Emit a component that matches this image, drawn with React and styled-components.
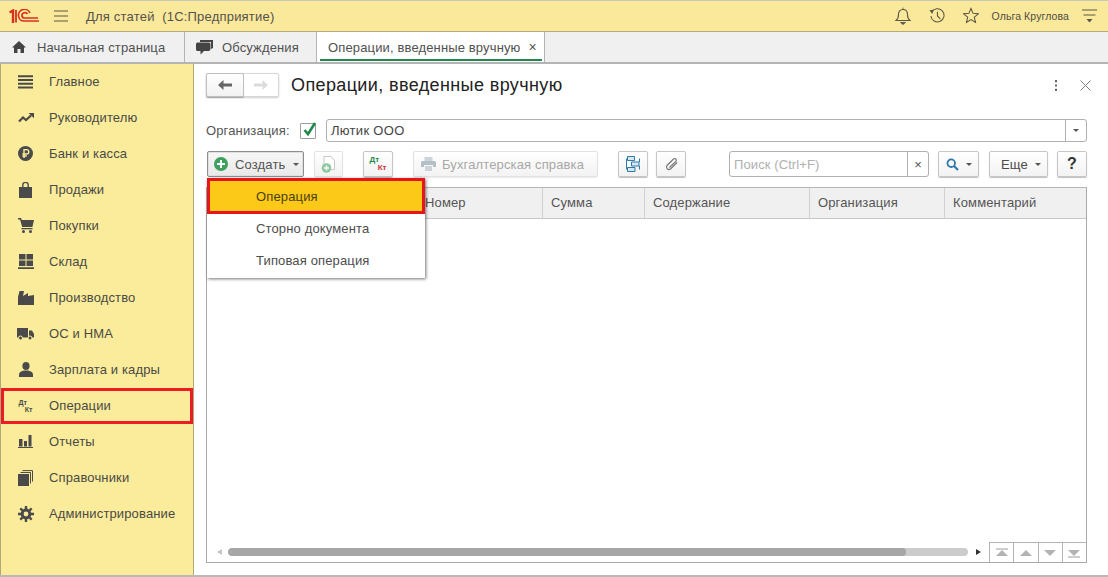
import React from "react";
import styled, { createGlobalStyle } from "styled-components";

const Global = createGlobalStyle`
  html, body { margin: 0; padding: 0; background: #fff; }
  * { box-sizing: border-box; }
  body { font-family: "Liberation Sans", Arial, sans-serif; color: #4b4b4b; }
`;
const Frame = styled.div`
  width: 1108px; height: 577px; display: flex; flex-direction: column; overflow: hidden;
  border-bottom: 2px solid #b9b9b9; font-size: 13px; letter-spacing: .14px;
`;
const TitleBar = styled.header`
  height: 32px; flex: none; display: flex; align-items: center; background: #fbe99b;
  border-top: 1px solid #c9c7b6; border-bottom: 1px solid #b5ab7c; padding: 0 0 0 9px;
`;
const TitleText = styled.span`margin-left: 18px; font-size: 13px; letter-spacing: .2px; color: #55524a; white-space: pre;`;
const Spacer = styled.div`flex: 1;`;
const TopIcon = styled.span`width: 16px; height: 18px; margin-right: ${p => p.$mr || 18}px; display: flex;`;
const UserName = styled.span`font-size: 10.5px; letter-spacing: .1px; color: #4f4c42; margin-right: 13px; margin-left: -1px;`;
const TabBar = styled.nav`
  height: 32px; flex: none; display: flex; background: #f0f0f0; border-bottom: 2px solid #b4b4b4;
`;
const Tab = styled.div`
  width: ${p => p.$w}px; flex: none; display: flex; align-items: center; gap: ${p => p.$gap || 0}px; position: relative;
  padding-left: ${p => p.$pad}px; border-right: 1px solid #b4b4b4; background: ${p => p.$active ? "#fff" : "transparent"};
  color: #505050; white-space: nowrap;
  ${p => p.$active && `&::after { content: ""; position: absolute; left: 3px; right: 2px; bottom: 1px; height: 2px; background: #22874f; }`}
`;
const TabClose = styled.span`margin-left: 8px; font-size: 14px; line-height: 1; color: #555;`;
const Body = styled.div`flex: 1; display: flex; min-height: 0;`;
const Sidebar = styled.aside`
  width: 194px; flex: none; background: #fbec9b; border-left: 1px solid #b0a877; border-right: 1px solid #b0a877;
`;
const NavItem = styled.div`
  height: 36px; display: flex; align-items: center; gap: 15px; padding-left: 16px; padding-bottom: 1px; color: #4a4a45;
  ${p => p.$marked && `outline: 3px solid #ed1c24; outline-offset: -3px; height: 36px;`}
`;
const NavIcon = styled.span`width: 17px; height: 17px; flex: none; display: flex; align-items: center; justify-content: center;`;
const Main = styled.main`
  flex: 1; min-width: 0; display: flex; flex-direction: column; padding: 9px 21px 12px 12px; background: #fff;
`;
const Header = styled.div`height: 24px; display: flex; align-items: center; flex: none;`;
const NavGroup = styled.div`
  width: 73px; height: 24px; display: flex; border: 1px solid #d8d8d8; border-radius: 2px; box-shadow: 0 1px 2px rgba(0,0,0,.2); background: #fff;
`;
const NavBtn = styled.div`
  flex: ${p => p.$w ? `0 0 ${p.$w}px` : 1}; display: flex; align-items: center; justify-content: center;
  ${p => p.$on && `border: 1px solid #c0c0c0; margin: -1px 0 -1px -1px; background: linear-gradient(#fff,#f2f2f2); box-shadow: 0 1px 1px rgba(0,0,0,.25); border-radius: 2px;`}
`;
const Title = styled.h1`margin: 0 0 0 12px; font-size: 18px; font-weight: 400; color: #222; letter-spacing: .38px; flex: 1;`;
const HeadIcon = styled.span`display: flex; margin-left: ${p => p.$ml}px; margin-right: ${p => p.$mr || 0}px;`;
const OrgRow = styled.div`height: 23px; margin-top: 22px; display: flex; align-items: center; flex: none;`;
const OrgLabel = styled.span`color: #555; width: 94px;`;
const CheckBox = styled.span`width: 16px; height: 16px; border: 1px solid #9c9c9c; border-radius: 1px; position: relative; flex: none; display: block; margin-right: 10px;`;
const CheckMark = styled.svg`position: absolute; left: 1px; top: -3px;`;
const Input = styled.div`
  flex: 1; height: 23px; border: 1px solid #b0b0b0; border-radius: 3px; display: flex; align-items: center; padding-left: 4px; color: #444; letter-spacing: .3px;
`;
const InputArrow = styled.span`width: 21px; height: 100%; margin-left: auto; border-left: 1px solid #b0b0b0; display: flex; align-items: center; justify-content: center;`;
const Caret = styled.i`display: block; width: 0; height: 0; border-left: 3px solid transparent; border-right: 3px solid transparent; border-top: 3px solid #555; margin-left: ${p => p.$ml || 0}px;`;
const Toolbar = styled.div`height: 26px; margin-top: 9px; display: flex; flex: none; align-items: stretch;`;
const Btn = styled.div`
  width: ${p => p.$w}px; margin-left: ${p => p.$ml || 0}px; flex: none; display: flex; align-items: center; justify-content: center; gap: ${p => p.$gap || 0}px;
  padding-left: ${p => p.$pl || 0}px; padding-right: ${p => p.$pr || 0}px;
  border: 1px solid ${p => p.$off ? "#e2e2e2" : "#c6c6c6"}; border-radius: 2px; background: linear-gradient(#fff,#f3f3f3);
  box-shadow: 0 1px 1px rgba(0,0,0,${p => p.$off ? ".08" : ".25"}); color: ${p => p.$off ? "#a8a8a8" : "#4b4b4b"}; white-space: nowrap;
`;
const CreateWrap = styled.div`position: relative; width: 97px; margin-left: 1px; flex: none;`;
const CreateBtn = styled.div`
  height: 26px; display: flex; align-items: center; gap: 7px; padding-left: 6px; border: 1px solid #8e8e8e; border-radius: 2px; background: linear-gradient(#f7f7f7,#e9e9e9); color: #555;
  box-shadow: inset 0 0 0 1px #e0e0e0;
`;
const Menu = styled.div`
  position: absolute; left: 0; top: 27px; width: 218px; height: 100px; z-index: 2; background: #fff; box-shadow: 1px 1px 3px rgba(0,0,0,.55); 
`;
const MenuItem = styled.div`
  height: 32px; display: flex; align-items: center; padding-left: ${p => p.$sel ? 46 : 49}px; color: #4d4d4d;
  ${p => p.$sel && `height: 36px; margin-bottom: -2px; background: #fcc918; border: 3px solid #e8141c; color: #4a3f12; position: relative;`}
`;
const Search = styled.div`
  width: 200px; margin-left: 43px; flex: none; display: flex; border: 1px solid #b0b0b0; border-radius: 3px; align-items: center; color: #b0b0b0; padding-left: 4px; letter-spacing: .1px;
`;
const SearchClear = styled.span`margin-left: auto; width: 21px; height: 100%; border-left: 1px solid #b0b0b0; display: flex; align-items: center; justify-content: center; color: #555; font-size: 13px;`;
const Table = styled.section`
  margin-top: 10px; flex: 1; min-height: 0; border: 1px solid #a9a9a9; border-top-color: #b5b5b5; display: flex; flex-direction: column;
`;
const HeadRow = styled.div`
  height: 31px; flex: none; display: grid; grid-template-columns: 209px 126px 102px 165px 135px 1fr; background: #f0f0f0; border-bottom: 1px solid #c8c8c8;
`;
const HeadCell = styled.div`display: flex; align-items: center; padding: 0 0 2px 8px; border-left: 1px solid #d0d0d0; color: #555; &:first-child { border-left: 0; }`;
const Rows = styled.div`flex: 1;`;
const ScrollRow = styled.div`height: 20px; display: flex; align-items: center; flex: none; padding-left: 10px;`;
const ScrollArrow = styled.i`
  display: block; width: 0; height: 0; border-top: 3.5px solid transparent; border-bottom: 3.5px solid transparent;
  ${p => p.$left ? `border-right: 5px solid #c6c6c6; margin-right: 6px;` : `border-left: 5px solid #333; margin-left: 8px;`}
`;
const Track = styled.div`width: 740px; height: 8px; border-radius: 4px; background: #cccccc; overflow: hidden;`;
const Thumb = styled.div`height: 100%; background: #a6a6a6; border-radius: 4px;`;
const Pager = styled.div`margin-left: auto; display: flex; height: 20px; margin-top: 0;`;
const PagerCell = styled.div`width: 24.25px; display: flex; align-items: center; justify-content: center; border-left: 1px solid #b4b4b4; border-top: 1px solid #b4b4b4; background: #fff;`;
const QMark = styled.strong`font-size: 16px; color: #333;`;
const DtKtLabel = styled.span`
  display: flex; flex-direction: column; width: ${p => p.$w}px; font-weight: 700; font-size: ${p => p.$fs}px; line-height: ${p => p.$lh}px; letter-spacing: 0;
`;
const Dt = styled.span`align-self: flex-start; color: ${p => p.$c};`;
const Kt = styled.span`align-self: flex-end; color: ${p => p.$c};`;

const dk = "#4a4a4a";
const icons = {
  main: <svg width="15" height="14" viewBox="0 0 15 14"><path d="M0 1.2h15M0 5h15M0 8.800h15M0 12.600h15" stroke={dk} strokeWidth="2"/></svg>,
  trend: <svg width="16" height="10" viewBox="0 0 16 10"><path d="M1 8.500l4-4 3 2.500 5-4.500" fill="none" stroke={dk} strokeWidth="2.200"/><path d="M10.500 0H16v5.200z" fill={dk}/></svg>,
  rub: <svg width="15" height="15" viewBox="0 0 15 15"><circle cx="7.500" cy="7.500" r="7.500" fill={dk}/><path d="M6 12V3.600h2.600a2 2 0 010 4.400H4.400M4.400 10h4.400" fill="none" stroke="#fbec9b" strokeWidth="1.400"/></svg>,
  bag: <svg width="13" height="16" viewBox="0 0 13 16"><path d="M0 5h13v11H0z" fill={dk}/><path d="M3.800 7V3a2.700 2.700 0 015.400 0v4" fill="none" stroke={dk} strokeWidth="1.400"/></svg>,
  cart: <svg width="16" height="15" viewBox="0 0 16 15"><path d="M0 0h3l.8 2H16l-1.600 7H4.200L2 1.500H0z" fill={dk}/><path d="M3.500 10h11v1.300h-11z" fill={dk}/><circle cx="5.500" cy="13.400" r="1.500" fill={dk}/><circle cx="12.500" cy="13.400" r="1.500" fill={dk}/></svg>,
  store: <svg width="16" height="15" viewBox="0 0 16 15"><path d="M1 0h6.500v5.500H1zM8.500 0H15v5.500H8.500zM1 6.500h6.500V12H1zM8.500 6.500H15V12H8.500zM0 13.300h16V15H0z" fill={dk}/></svg>,
  factory: <svg width="16" height="14" viewBox="0 0 16 14"><path d="M0 14V6L1.500 0H6L5 5l5-3v3l6-1v10z" fill={dk}/></svg>,
  truck: <svg width="17" height="12" viewBox="0 0 17 12"><path d="M0 0h11v9.500H0zM12 2.500h3L17 6v3.500h-5z" fill={dk}/><circle cx="3.500" cy="10" r="2" fill={dk} stroke="#fbec9b"/><circle cx="13" cy="10" r="2" fill={dk} stroke="#fbec9b"/></svg>,
  user: <svg width="14" height="15" viewBox="0 0 14 15"><ellipse cx="7" cy="4" rx="3.600" ry="4" fill={dk}/><path d="M0 15v-2.500C0 10 3 9 5 8.500h4c2 .5 5 1.500 5 4V15z" fill={dk}/></svg>,
  report: <svg width="15" height="13" viewBox="0 0 15 13"><path d="M1 4h3.500v7.500H1zM6 6h3v5.500H6zM10.500 0h3v11.500h-3zM0 12h15v1H0z" fill={dk}/></svg>,
  book: <svg width="15" height="16" viewBox="0 0 15 16"><path d="M0 4h11v12H0z" fill={dk}/><path d="M2.500 2.500h10v11M4.500.6h10v11" fill="none" stroke={dk} strokeWidth="1"/></svg>,
  gear: <svg width="16" height="16" viewBox="0 0 16 16"><path d="M8 2.600a5.400 5.400 0 100 10.800A5.400 5.400 0 008 2.600zm0 3a2.400 2.400 0 110 4.800 2.400 2.400 0 010-4.800z" fill={dk} fillRule="evenodd"/><path d="M8 0v3M8 13v3M0 8h3M13 8h3M2.300 2.300l2.200 2.200M11.500 11.500l2.200 2.200M13.700 2.300l-2.200 2.200M4.500 11.500l-2.200 2.200" stroke={dk} strokeWidth="2.400"/></svg>,
};
const nav = [
  ["Главное", icons.main], ["Руководителю", icons.trend], ["Банк и касса", icons.rub], ["Продажи", icons.bag],
  ["Покупки", icons.cart], ["Склад", icons.store], ["Производство", icons.factory], ["ОС и НМА", icons.truck],
  ["Зарплата и кадры", icons.user],
  ["Операции", <DtKtLabel $w={14} $fs={7} $lh={7}><Dt $c={dk}>Дт</Dt><Kt $c={dk}>Кт</Kt></DtKtLabel>, true],
  ["Отчеты", icons.report], ["Справочники", icons.book], ["Администрирование", icons.gear],
];
const line = "#5b5643";
const PagerIcon = ({ up, bar, c = "#b3b3b3" }) => (
  <svg width="14" height="10" viewBox="0 0 14 10">
    <path d={up ? "M7 2l6 6H1z" : "M7 8L1 2h12z"} fill={c} />
    {bar && <path d={up ? "M1 1h12" : "M1 9h12"} stroke={c} strokeWidth="1.300" />}
  </svg>
);
const GreenPlus = ({ s = 14 }) => (
  <svg width={s} height={s} viewBox="0 0 14 14">
    <circle cx="7" cy="7" r="7" fill="#3f9f5c" /><path d="M7 3v8M3 7h8" stroke="#fff" strokeWidth="2" />
  </svg>
);

export default function App() {
  return (
    <Frame>
      <Global />
      <TitleBar>
        <svg width="30" height="15" viewBox="0 0 30 15">
          <path d="M.5 3.500L4 1.500V14" stroke="#d9301f" strokeWidth="2.400" fill="none" />
          <path d="M7 1v12.500" stroke="#d9301f" strokeWidth="1.800" />
          <path d="M21 4a6 6 0 00-11.500 3a5.500 5.500 0 005.500 5h15" stroke="#d9301f" strokeWidth="1.700" fill="none" />
          <path d="M18.500 5a3 3 0 00-5.500 2a2.500 2.500 0 002.500 2H29" stroke="#d9301f" strokeWidth="1.700" fill="none" />
        </svg>
        <svg width="14" height="12" viewBox="0 0 14 12" style={{ marginLeft: 15 }}><path d="M0 1h14M0 6h14M0 11h14" stroke={line} strokeWidth="1.100" /></svg>
        <TitleText>Для статей  (1С:Предприятие)</TitleText>
        <Spacer />
        <TopIcon>
          <svg width="16" height="18" viewBox="0 0 16 18"><path d="M1 13.500c2-1.500 2.500-3 2.500-6S5 2.500 8 2.500s4.500 2 4.500 5 .5 4.500 2.500 6z" fill="none" stroke={line} strokeWidth="1.100" /><path d="M8 .5v2M5.500 15.500h5l-2.500 2z" stroke={line} fill={line} strokeWidth=".8" /></svg>
        </TopIcon>
        <TopIcon>
          <svg width="17" height="17" viewBox="0 0 17 17"><path d="M2.800 5a7 7 0 11-.8 4" fill="none" stroke={line} strokeWidth="1.100" /><path d="M.5 3l4.500-.5L3.500 7z" fill={line} /><path d="M9 4.500v4.500l3 3" fill="none" stroke={line} strokeWidth="1.200" /></svg>
        </TopIcon>
        <TopIcon $mr={14}>
          <svg width="17" height="17" viewBox="0 0 17 17"><path d="M8.500 1l2.200 5.200 5.600.5-4.300 3.600 1.300 5.500-4.800-2.900-4.800 2.900 1.300-5.500L.7 6.700l5.600-.5z" fill="none" stroke={line} strokeWidth="1.100" /></svg>
        </TopIcon>
        <UserName>Ольга Круглова</UserName>
        <svg width="15" height="14" viewBox="0 0 15 14" style={{ marginRight: 11 }}><path d="M0 1h15M1.500 6h12" stroke={line} strokeWidth="1.100" /><path d="M4.500 10h6L7.500 13.500z" fill={line} /></svg>
      </TitleBar>
      <TabBar>
        <Tab $w={185} $pad={12} $gap={11}>
          <svg width="14" height="12" viewBox="0 0 14 12"><path d="M7 0l7 6.500h-2V12H8.500V8h-3v4H2V6.500H0z" fill="#444" /></svg>
          Начальная страница
        </Tab>
        <Tab $w={132} $pad={11} $gap={9}>
          <svg width="17" height="15" viewBox="0 0 17 15"><path d="M4 0h13v8l-2 1V2H4z" fill="#444" /><path d="M1.500 2.500H13a1.500 1.500 0 011.500 1.500v5a2 2 0 01-2 2H8l-3.500 3.500V11h-3A1.500 1.500 0 010 9.500V4a1.500 1.500 0 011.500-1.500z" fill="#444" /></svg>
          Обсуждения
        </Tab>
        <Tab $w={228} $pad={11} $active>
          Операции, введенные вручную
          <TabClose>×</TabClose>
        </Tab>
      </TabBar>
      <Body>
        <Sidebar>
          {nav.map(([t, ic, m]) => (
            <NavItem key={t} $marked={m}><NavIcon>{ic}</NavIcon>{t}</NavItem>
          ))}
        </Sidebar>
        <Main>
          <Header>
            <NavGroup>
              <NavBtn $w={38} $on>
                <svg width="14" height="10" viewBox="0 0 14 10"><path d="M0 5l5.500-5v3.500H14v3H5.500V10z" fill="#666" /></svg>
              </NavBtn>
              <NavBtn>
                <svg width="14" height="10" viewBox="0 0 14 10"><path d="M14 5L8.500 0v3.500H0v3h8.500V10z" fill="#dcdcdc" /></svg>
              </NavBtn>
            </NavGroup>
            <Title>Операции, введенные вручную</Title>
            <HeadIcon><svg width="4" height="11" viewBox="0 0 4 11"><path d="M1 0h2v2.200H1zM1 4.400h2v2.200H1zM1 8.800h2V11H1z" fill="#666" /></svg></HeadIcon>
            <HeadIcon $ml={22} $mr={-4}><svg width="11" height="11" viewBox="0 0 11 11"><path d="M.5.5l10 10M10.500.5l-10 10" stroke="#808080" strokeWidth="1" /></svg></HeadIcon>
          </Header>
          <OrgRow>
            <OrgLabel>Организация:</OrgLabel>
            <CheckBox>
              <CheckMark width="15" height="16" viewBox="0 0 15 16"><path d="M2.500 9l3.500 4L13 2" fill="none" stroke="#1f8a4c" strokeWidth="2.600" /></CheckMark>
            </CheckBox>
            <Input>Лютик ООО<InputArrow><Caret /></InputArrow></Input>
          </OrgRow>
          <Toolbar>
            <CreateWrap>
              <CreateBtn><GreenPlus />Создать<Caret $ml={1} /></CreateBtn>
              <Menu>
                <MenuItem $sel>Операция</MenuItem>
                <MenuItem>Сторно документа</MenuItem>
                <MenuItem>Типовая операция</MenuItem>
              </Menu>
            </CreateWrap>
            <Btn $w={29} $ml={10} $off>
              <svg width="15" height="17" viewBox="0 0 15 17"><path d="M3 .5h7l3.500 4v9H3z" fill="#fff" stroke="#c8c8c8" /><circle cx="5.500" cy="12" r="4.800" fill="#8fc7a0" /><path d="M5.500 9.500v5M3 12h5" stroke="#fff" strokeWidth="1.400" /></svg>
            </Btn>
            <Btn $w={30} $ml={20}>
              <DtKtLabel $w={17} $fs={8} $lh={8}><Dt $c="#1e8a4c">Дт</Dt><Kt $c="#c9353b">Кт</Kt></DtKtLabel>
            </Btn>
            <Btn $w={185} $ml={20} $gap={6} $pr={6} $off>
              <svg width="15" height="14" viewBox="0 0 15 14"><path d="M3.500 0h8v4h-8z" fill="#ccd4da" /><path d="M1.500 4h12A1.500 1.500 0 0115 5.500V10h-3V8H3v2H0V5.500A1.500 1.500 0 011.500 4z" fill="#b4c0c8" /><path d="M4 9h7v5H4z" fill="#ccd4da" /></svg>
              Бухгалтерская справка
            </Btn>
            <Btn $w={30} $ml={20}>
              <svg width="14" height="16" viewBox="0 0 14 16" fill="none"><path d="M1.500.5h7v4h-7zM5.500 6h7.500v4h-7.500zM1.500 11.500h7.500v4H1.500z" fill="#d8e8f2" stroke="#2f78a8" /><path d="M.5 2.500v11M13.500 2.500V6M13.500 10v3.500" stroke="#2f78a8" /></svg>
            </Btn>
            <Btn $w={30} $ml={8}>
              <svg width="15" height="15" viewBox="0 0 15 15"><path d="M13 5.500L6.500 12A2.500 2.500 0 013 8.500l6.500-6.500a1.600 1.600 0 012.300 2.300L5.500 10.500" fill="none" stroke="#777" strokeWidth="1.200" /></svg>
            </Btn>
            <Search>Поиск (Ctrl+F)<SearchClear>×</SearchClear></Search>
            <Btn $w={41} $ml={9} $gap={7}>
              <svg width="13" height="13" viewBox="0 0 13 13"><circle cx="5.200" cy="5.200" r="3.800" fill="none" stroke="#2d78ad" strokeWidth="1.800" /><path d="M8 8l4 4" stroke="#2d78ad" strokeWidth="2.200" /></svg>
              <Caret />
            </Btn>
            <Btn $w={59} $ml={10} $gap={7} $pl={5}>Еще<Caret /></Btn>
            <Btn $w={30} $ml={9}><QMark>?</QMark></Btn>
          </Toolbar>
          <Table>
            <HeadRow>
              <HeadCell />
              <HeadCell>Номер</HeadCell>
              <HeadCell>Сумма</HeadCell>
              <HeadCell>Содержание</HeadCell>
              <HeadCell>Организация</HeadCell>
              <HeadCell>Комментарий</HeadCell>
            </HeadRow>
            <Rows />
            <ScrollRow>
              <ScrollArrow $left />
              <Track><Thumb style={{ width: `${(678 / 740) * 100}%` }} /></Track>
              <ScrollArrow />
              <Pager>
                <PagerCell><PagerIcon up bar /></PagerCell>
                <PagerCell><PagerIcon up /></PagerCell>
                <PagerCell><PagerIcon /></PagerCell>
                <PagerCell><PagerIcon bar /></PagerCell>
              </Pager>
            </ScrollRow>
          </Table>
        </Main>
      </Body>
    </Frame>
  );
}
